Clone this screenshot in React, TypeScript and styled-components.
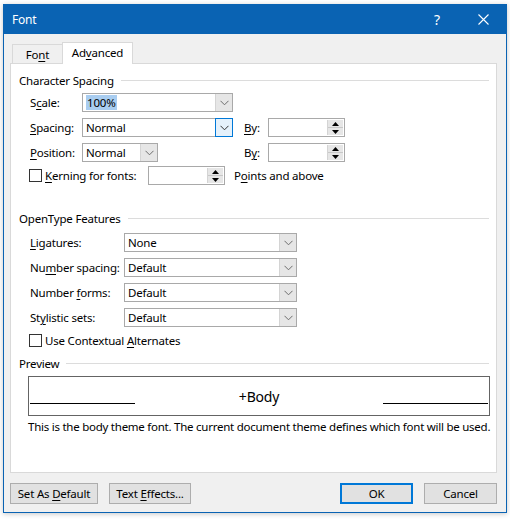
import React from "react";
import styled, { createGlobalStyle, css } from "styled-components";

const GlobalStyle = createGlobalStyle`
  html, body { margin: 0; padding: 0; background: #ffffff; }
  body {
    font-family: "Noto Sans", "Open Sans", Arial, sans-serif;
    font-size: 11.5px;
    letter-spacing: -0.2px;
    color: #000;
  }
  * { box-sizing: border-box; }
`;

const Page = styled.div`
  width: 510px;
  height: 519px;
  padding: 4px 0 0 3px;
`;

const Dialog = styled.div`
  width: 504px;
  height: 509px;
  border: 1px solid #0a63b3;
  background: #f0f0f0;
  display: flex;
  flex-direction: column;
  box-shadow: 0 1px 5px rgba(0, 0, 0, 0.22);
`;

const TitleBar = styled.div`
  height: 29px;
  background: #0a63b3;
  color: #fff;
  display: flex;
  align-items: center;
  padding-left: 8px;
  flex-shrink: 0;
`;

const TitleText = styled.div`
  flex: 1;
  font-size: 12px;
  padding-bottom: 1px;
`;

const TitleButton = styled.div`
  width: 46px;
  height: 29px;
  display: flex;
  align-items: center;
  justify-content: center;
  color: #fff;
  font-size: 14px;
`;

const Body = styled.div`
  flex: 1;
  display: flex;
  flex-direction: column;
  padding: 8px 9px 8px 6px;
`;

const TabStrip = styled.div`
  height: 21px;
  display: flex;
  align-items: flex-end;
  padding-left: 2px;
`;

const Tab = styled.div<{ $active?: boolean }>`
  position: relative;
  text-align: center;
  border: 1px solid #d9d9d9;
  border-bottom: none;
  ${(p) =>
    p.$active
      ? css`
          width: 71px;
          height: 22px;
          line-height: 20px;
          margin-bottom: -1px;
          background: #fff;
          z-index: 1;
        `
      : css`
          width: 50px;
          height: 19px;
          line-height: 20px;
          background: #f0f0f0;
          border-right: none;
        `}
`;

const Panel = styled.div`
  height: 410px;
  background: #fff;
  border: 1px solid #d9d9d9;
  padding: 8px 7px 0 8px;
  display: flex;
  flex-direction: column;
`;

const SectionHeading = styled.div<{ $mt?: number }>`
  height: 16px;
  display: flex;
  align-items: center;
  margin-top: ${(p) => p.$mt ?? 0}px;
  &::after {
    content: "";
    flex: 1;
    height: 1px;
    background: #dcdcdc;
    margin-left: 7px;
  }
`;

const Rows = styled.div<{ $mt: number; $labelWidth: number }>`
  margin-top: ${(p) => p.$mt}px;
  padding-left: 11px;
  display: grid;
  grid-template-columns: ${(p) => p.$labelWidth}px auto;
  row-gap: 6px;
  justify-content: start;
  align-items: center;
`;

const Row = styled.div`
  display: contents;
`;

const Label = styled.span<{ $ml?: number; $w?: number }>`
  display: inline-block;
  height: 19px;
  line-height: 19px;
  white-space: nowrap;
  margin-left: ${(p) => p.$ml ?? 0}px;
  ${(p) => (p.$w ? `width: ${p.$w}px;` : "")}
  flex-shrink: 0;
`;

const Line = styled.div`
  display: flex;
  align-items: center;
  height: 19px;
`;

const U = styled.span`
  text-decoration: underline;
  text-underline-offset: 2px;
`;

const ComboBox = styled.div<{ $w: number }>`
  width: ${(p) => p.$w}px;
  height: 19px;
  border: 1px solid #a9a9a9;
  background: #fff;
  display: flex;
  align-items: stretch;
  flex-shrink: 0;
`;

const ComboText = styled.div`
  flex: 1;
  display: flex;
  align-items: center;
  padding-left: 3px;
`;

const Selected = styled.span`
  background: #a9cdf0;
  padding: 0 1px;
  line-height: 15px;
`;

const ArrowButton = styled.div<{ $hot?: boolean }>`
  width: 17px;
  display: flex;
  align-items: center;
  justify-content: center;
  ${(p) =>
    p.$hot
      ? css`
          background: #e5f1fb;
          border: 1px solid #0078d7;
          margin: -1px -1px -1px 0;
          width: 18px;
        `
      : css`
          background: #e6e6e6;
          border-left: 1px solid #d4d4d4;
        `}
`;

const SpinBox = styled.div<{ $w: number }>`
  width: ${(p) => p.$w}px;
  height: 19px;
  border: 1px solid #a9a9a9;
  background: #fff;
  display: flex;
  justify-content: flex-end;
  padding: 1px;
  flex-shrink: 0;
`;

const Spinner = styled.div`
  width: 16px;
  display: flex;
  flex-direction: column;
  background: #e6e6e6;
  border-left: 1px solid #d4d4d4;
`;

const SpinHalf = styled.div<{ $top?: boolean }>`
  flex: 1;
  display: flex;
  align-items: center;
  justify-content: center;
  ${(p) => (p.$top ? "border-bottom: 1px solid #c8c8c8;" : "")}
`;

const CheckRow = styled.div<{ $mt?: number }>`
  display: flex;
  align-items: center;
  height: 19px;
  padding-left: 11px;
  margin-top: ${(p) => p.$mt ?? 0}px;
`;

const CheckBox = styled.div`
  width: 13px;
  height: 13px;
  border: 1px solid #333;
  background: #fff;
  margin-right: 3px;
  margin-left: -1px;
  flex-shrink: 0;
`;

const PreviewBox = styled.div`
  margin: 5px 0 0 9px;
  width: 462px;
  height: 40px;
  border: 1px solid #646464;
  display: flex;
  align-items: flex-end;
  padding: 0 1px 11px 1px;
`;

const PreviewLine = styled.div`
  width: 105px;
  height: 1px;
  background: #000;
`;

const PreviewText = styled.div`
  flex: 1;
  text-align: center;
  font-size: 14px;
  line-height: 20px;
  margin-bottom: -3px;
`;

const Description = styled.div`
  margin: 3px 0 0 9px;
  height: 16px;
  line-height: 16px;
  white-space: nowrap;
  letter-spacing: -0.25px;
`;

const ButtonBar = styled.div`
  margin-top: 10px;
  height: 21px;
  display: flex;
  gap: 11px;
`;

const Spacer = styled.div`
  flex: 1;
`;

const Button = styled.div<{ $w: number; $default?: boolean }>`
  width: ${(p) => p.$w}px;
  height: 21px;
  background: #e1e1e1;
  border: ${(p) => (p.$default ? "2px solid #0078d7" : "1px solid #adadad")};
  line-height: ${(p) => (p.$default ? 17 : 19)}px;
  text-align: center;
  white-space: nowrap;
`;

const Chevron = ({ color = "#6d6d6d" }: { color?: string }) => (
  <svg width="9" height="6" viewBox="0 0 9 6">
    <path d="M0.5 0.8 L4.5 4.8 L8.5 0.8" fill="none" stroke={color} strokeWidth="1" />
  </svg>
);

const Tri = ({ up }: { up?: boolean }) => (
  <svg width="7" height="4" viewBox="0 0 7 4">
    {up ? <path d="M0 4 L3.5 0 L7 4 Z" fill="#000" /> : <path d="M0 0 L3.5 4 L7 0 Z" fill="#000" />}
  </svg>
);

const Combo = ({ w, text, hot, selected }: { w: number; text: string; hot?: boolean; selected?: boolean }) => (
  <ComboBox $w={w}>
    <ComboText>{selected ? <Selected>{text}</Selected> : text}</ComboText>
    <ArrowButton $hot={hot}>
      <Chevron color={hot ? "#333" : "#6d6d6d"} />
    </ArrowButton>
  </ComboBox>
);

const Spin = ({ w }: { w: number }) => (
  <SpinBox $w={w}>
    <Spinner>
      <SpinHalf $top>
        <Tri up />
      </SpinHalf>
      <SpinHalf>
        <Tri />
      </SpinHalf>
    </Spinner>
  </SpinBox>
);

export default function App() {
  return (
    <>
      <GlobalStyle />
      <Page>
        <Dialog>
          <TitleBar>
            <TitleText>Font</TitleText>
            <TitleButton>?</TitleButton>
            <TitleButton>
              <svg width="11" height="11" viewBox="0 0 11 11">
                <path d="M0.5 0.5 L10.5 10.5 M10.5 0.5 L0.5 10.5" stroke="#fff" strokeWidth="1.1" />
              </svg>
            </TitleButton>
          </TitleBar>
          <Body>
            <TabStrip>
              <Tab>
                Fo<U>n</U>t
              </Tab>
              <Tab $active>
                Ad<U>v</U>anced
              </Tab>
            </TabStrip>
            <Panel>
              <SectionHeading>Character Spacing</SectionHeading>
              <Rows $mt={5} $labelWidth={52}>
                <Row>
                  <Label>
                    S<U>c</U>ale:
                  </Label>
                  <Combo w={151} text="100%" selected />
                </Row>
                <Row>
                  <Label>
                    <U>S</U>pacing:
                  </Label>
                  <Line>
                    <Combo w={151} text="Normal" hot />
                    <Label $ml={11} $w={24}>
                      <U>B</U>y:
                    </Label>
                    <Spin w={77} />
                  </Line>
                </Row>
                <Row>
                  <Label>
                    <U>P</U>osition:
                  </Label>
                  <Line>
                    <Combo w={76} text="Normal" />
                    <Label $ml={86} $w={24}>
                      B<U>y</U>:
                    </Label>
                    <Spin w={77} />
                  </Line>
                </Row>
              </Rows>
              <CheckRow $mt={4}>
                <CheckBox />
                <Label $w={103}>
                  <U>K</U>erning for fonts:
                </Label>
                <Spin w={77} />
                <Label $ml={9}>
                  P<U>o</U>ints and above
                </Label>
              </CheckRow>

              <SectionHeading $mt={25}>OpenType Features</SectionHeading>
              <Rows $mt={7} $labelWidth={94}>
                <Row>
                  <Label>
                    <U>L</U>igatures:
                  </Label>
                  <Combo w={173} text="None" />
                </Row>
                <Row>
                  <Label>
                    Nu<U>m</U>ber spacing:
                  </Label>
                  <Combo w={173} text="Default" />
                </Row>
                <Row>
                  <Label>
                    Number <U>f</U>orms:
                  </Label>
                  <Combo w={173} text="Default" />
                </Row>
                <Row>
                  <Label>
                    St<U>y</U>listic sets:
                  </Label>
                  <Combo w={173} text="Default" />
                </Row>
              </Rows>
              <CheckRow $mt={4}>
                <CheckBox />
                <Label>
                  Use Contextual <U>A</U>lternates
                </Label>
              </CheckRow>

              <SectionHeading $mt={5}>Preview</SectionHeading>
              <PreviewBox>
                <PreviewLine />
                <PreviewText>+Body</PreviewText>
                <PreviewLine />
              </PreviewBox>
              <Description>
                This is the body theme font. The current document theme defines which font will be used.
              </Description>
            </Panel>
            <ButtonBar>
              <Button $w={88}>
                Set As <U>D</U>efault
              </Button>
              <Button $w={82}>
                Text <U>E</U>ffects...
              </Button>
              <Spacer />
              <Button $w={73} $default>
                OK
              </Button>
              <Button $w={73}>Cancel</Button>
            </ButtonBar>
          </Body>
        </Dialog>
      </Page>
    </>
  );
}
